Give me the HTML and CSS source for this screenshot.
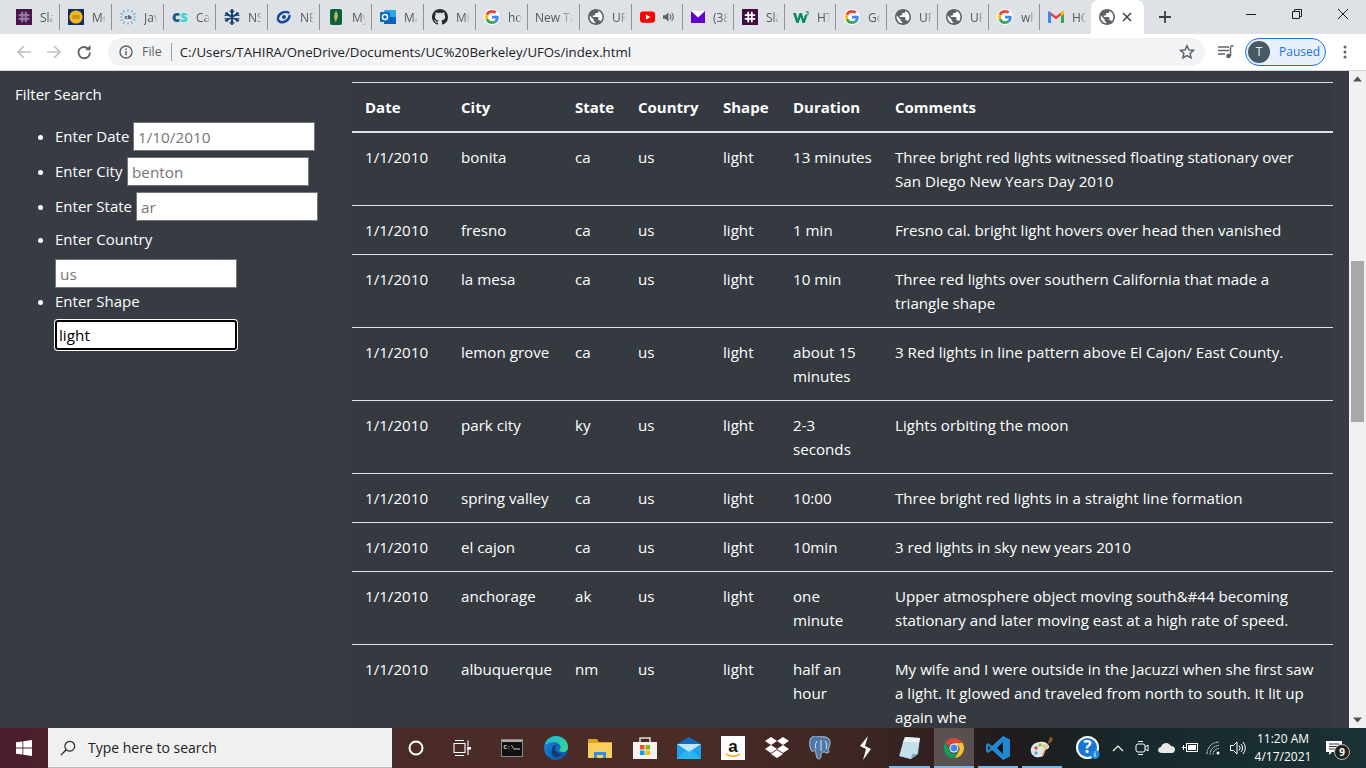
FILE: index.html
```html
<!DOCTYPE html>
<html lang="en">
<head>
<meta charset="utf-8">
<title>UFOs</title>
<link rel="stylesheet" href="styles.css">
</head>
<body>
<svg class="defs" width="0" height="0" aria-hidden="true">
  <defs>
    <symbol id="globe" viewBox="2 2 20 20"><circle cx="12" cy="12" r="9" fill="#fff"/><path fill="#5f6368" d="M12 2C6.480 2 2 6.480 2 12s4.480 10 10 10 10-4.480 10-10S17.520 2 12 2zm-1 17.930c-3.950-.49-7-3.850-7-7.930 0-.62.080-1.210.210-1.790L9 15v1c0 1.100.9 2 2 2v1.930zm6.900-2.540c-.26-.81-1-1.390-1.900-1.390h-1v-3c0-.55-.45-1-1-1H8v-2h2c.550 0 1-.45 1-1V7h2c1.100 0 2-.9 2-2v-.41c2.930 1.190 5 4.060 5 7.410 0 2.080-.8 3.970-2.100 5.390z"/></symbol>
    <symbol id="gee" viewBox="0 0 48 48"><path fill="#EA4335" d="M24 9.500c3.540 0 6.710 1.220 9.210 3.600l6.850-6.850C35.900 2.380 30.470 0 24 0 14.620 0 6.510 5.380 2.560 13.220l7.980 6.190C12.430 13.720 17.740 9.500 24 9.500z"/><path fill="#4285F4" d="M46.980 24.550c0-1.570-.15-3.090-.38-4.550H24v9.020h12.940c-.58 2.960-2.260 5.480-4.780 7.180l7.730 6c4.510-4.180 7.090-10.360 7.090-17.650z"/><path fill="#FBBC05" d="M10.530 28.590c-.48-1.450-.76-2.990-.76-4.590s.27-3.140.76-4.590l-7.980-6.190C.92 16.460 0 20.120 0 24c0 3.880.92 7.540 2.560 10.780l7.970-6.190z"/><path fill="#34A853" d="M24 48c6.480 0 11.930-2.130 15.890-5.810l-7.730-6c-2.150 1.450-4.920 2.300-8.160 2.300-6.260 0-11.570-4.220-13.470-9.910l-7.980 6.190C6.510 42.620 14.620 48 24 48z"/></symbol>
  </defs>
</svg>

<header class="tabstrip">
  <div class="tab wide"><svg class="fav" width="16" height="16" viewBox="0 0 16 16"><rect width="16" height="16" fill="#4a154b"/><path fill="none" stroke="#94799a" stroke-width="2.200" stroke-linecap="round" d="M6.200 3.500v9M9.800 3.500v9M3.500 6.200h9M3.500 9.800h9"/></svg><span class="tab-title">Slack</span></div>
  <div class="tab wide"><svg class="fav" width="16" height="16" viewBox="0 0 16 16"><rect width="16" height="16" fill="#0b2f66"/><circle cx="8" cy="8" r="6.600" fill="#f3b81f"/><path d="M4 7h8M4.500 9h7" stroke="#8a6a10" stroke-width=".9"/></svg><span class="tab-title">Medium</span></div>
  <div class="tab wide"><svg class="fav" width="16" height="16" viewBox="0 0 16 16"><g stroke="#5db4e4" stroke-width="1.100" stroke-linecap="round"><path d="M8 .5v2M3.500 1.500l1 1.800M12.500 1.500l-1 1.800M.8 4.500l1.900 1M15.200 4.500l-1.900 1M.8 11.500l1.900-1M15.200 11.500l-1.900-1M3.500 14.500l1-1.800M12.500 14.500l-1-1.800M8 15.500v-2M.5 8h1.500M14 8h1.500"/></g><text class="fav-cb" x="8" y="10">cb</text></svg><span class="tab-title">JavaScript</span></div>
  <div class="tab wide"><svg class="fav" width="16" height="16" viewBox="0 0 16 16"><text class="fav-cs" x="0" y="12.500"><tspan fill="#155a84">c</tspan><tspan fill="#3ed6d2">s</tspan></text></svg><span class="tab-title">Canvas</span></div>
  <div class="tab wide"><svg class="fav" width="16" height="16" viewBox="0 0 16 16"><g stroke="#123f6d" stroke-width="1.900" stroke-linecap="round" fill="none"><path d="M8 .8v14.400M1.800 4.400l12.400 7.200M14.200 4.400L1.800 11.600"/><path d="M6 1.800l2 2 2-2M6 14.200l2-2 2 2M1 6.500l2.800-.4L3 3.500M15 6.500l-2.800-.4.800-2.600M1 9.500l2.800.4L3 12.500M15 9.500l-2.800.4.800 2.600" stroke-width="1.200"/></g></svg><span class="tab-title">NSF</span></div>
  <div class="tab wide"><svg class="fav" width="16" height="16" viewBox="0 0 16 16"><path fill="none" stroke="#17489c" stroke-width="2.400" stroke-linecap="round" d="M12.500 3.500C9 1.800 3.200 4 2 8.500c-.8 3 2 5.500 5.500 4.500 3-.8 5.500-3 6-6"/><circle cx="8" cy="8" r="2" fill="#17489c"/></svg><span class="tab-title">NEA</span></div>
  <div class="tab wide"><svg class="fav" width="16" height="16" viewBox="0 0 16 16"><rect x="2" width="12" height="16" rx="2" fill="#0d5f3c"/><path d="M8 2c2 2 2.500 5 1 8-.4 1-1 2-1 4-.2-2-1.500-3-1.800-5C6 6.500 6.500 4 8 2z" fill="#c8b560"/></svg><span class="tab-title">My Wells</span></div>
  <div class="tab wide"><svg class="fav" width="16" height="16" viewBox="0 0 16 16"><rect x="4" y="1" width="12" height="14" rx="1" fill="#28a8ea"/><path d="M4 8h12v7H4z" fill="#0364b8"/><rect y="3" width="10" height="10" rx="1" fill="#0f6cbd"/><circle cx="5" cy="8" r="2.500" fill="none" stroke="#fff" stroke-width="1.400"/></svg><span class="tab-title">Mail</span></div>
  <div class="tab wide"><svg class="fav" width="16" height="16" viewBox="0 0 16 16"><path fill="#24292e" d="M8 0C3.580 0 0 3.580 0 8c0 3.540 2.290 6.530 5.470 7.590.4.070.55-.17.55-.38 0-.19-.01-.82-.01-1.490-2.010.37-2.530-.49-2.690-.94-.09-.23-.48-.94-.82-1.130-.28-.15-.68-.52-.01-.53.630-.01 1.080.58 1.230.82.720 1.210 1.870.87 2.330.66.070-.52.280-.87.510-1.070-1.780-.2-3.640-.89-3.640-3.950 0-.87.310-1.590.820-2.150-.08-.2-.36-1.020.08-2.120 0 0 .67-.21 2.200.82.640-.18 1.320-.27 2-.27.680 0 1.360.090 2 .27 1.530-1.040 2.200-.82 2.200-.82.440 1.100.160 1.920.080 2.120.510.560.820 1.270.820 2.150 0 3.070-1.870 3.750-3.650 3.950.290.250.540.730.540 1.480 0 1.070-.01 1.930-.01 2.200 0 .210.150.460.550.380A8.013 8.013 0 0016 8c0-4.420-3.580-8-8-8z"/></svg><span class="tab-title">Mission</span></div>
  <div class="tab wide"><span class="gee-wrap"><svg width="14" height="14"><use href="#gee"/></svg></span><span class="tab-title">how to</span></div>
  <div class="tab wide notab-icon"><span class="tab-title">New Tab</span></div>
  <div class="tab wide"><svg class="fav" width="16" height="16"><use href="#globe"/></svg><span class="tab-title">UFOs</span></div>
  <div class="tab"><svg class="fav" width="15" height="12" viewBox="0 0 16 12"><rect width="16" height="12" rx="3" fill="#f00"/><path d="M6.300 3.200v5.600L11 6z" fill="#fff"/></svg><svg class="speaker" width="11" height="12" viewBox="0 0 12 12"><path fill="#5f6368" d="M0 4h2.500L6 1v10L2.500 8H0z"/><path fill="none" stroke="#5f6368" stroke-width="1.200" d="M7.500 3.500a3.500 3.500 0 010 5M9.500 1.800a6 6 0 010 8.400"/></svg></div>
  <div class="tab"><svg class="fav" width="14" height="12" viewBox="0 0 14 12"><rect width="14" height="12" fill="#5f01d1"/><path d="M0 0l7 6.500L14 0" fill="#fff"/></svg><span class="tab-title">(38)</span></div>
  <div class="tab"><svg class="fav" width="16" height="16" viewBox="0 0 16 16"><rect width="16" height="16" fill="#3f0e40"/><path fill="none" stroke="#fff" stroke-width="1.800" stroke-linecap="round" d="M6.200 3.500v9M9.800 3.500v9M3.500 6.200h9M3.500 9.800h9"/></svg><span class="tab-title">Slack</span></div>
  <div class="tab"><svg class="fav" width="16" height="14" viewBox="0 0 16 14"><path d="M0 3h3l1.600 6L6.500 3h2.300l1.800 6L12 5h2.500l-2.800 8H9.500L7.600 7l-2 6H3.400z" fill="#0a8a5f"/><text class="fav-w3" x="12.500" y="5">3</text></svg><span class="tab-title">HTML</span></div>
  <div class="tab"><span class="gee-wrap"><svg width="14" height="14"><use href="#gee"/></svg></span><span class="tab-title">Google</span></div>
  <div class="tab"><svg class="fav" width="16" height="16"><use href="#globe"/></svg><span class="tab-title">UFOs</span></div>
  <div class="tab"><svg class="fav" width="16" height="16"><use href="#globe"/></svg><span class="tab-title">UFOs</span></div>
  <div class="tab"><span class="gee-wrap"><svg width="14" height="14"><use href="#gee"/></svg></span><span class="tab-title">what</span></div>
  <div class="tab tab-last"><svg class="fav" width="16" height="12" viewBox="0 0 16 12"><path fill="#4285f4" d="M0 1.300C0 .3 1 0 1.800.5L3 1.400V12H1.100C.5 12 0 11.500 0 10.900z"/><path fill="#34a853" d="M13 1.400l1.200-.9c.8-.5 1.800-.2 1.800.8v9.600c0 .6-.5 1.100-1.100 1.100H13z"/><path fill="#ea4335" d="M3 1.400l5 3.800 5-3.800v3L8 8.200 3 4.400z"/><path fill="#fbbc04" d="M13 1.400l1.200-.9c.8-.5 1.800-.2 1.800.8V3l-3 2.300z"/></svg><span class="tab-title">HOME</span></div>
  <div class="tab-active"><svg class="fav" width="16" height="16"><use href="#globe"/></svg><svg class="tab-close" width="10" height="10" viewBox="0 0 10 10"><path d="M1 1l8 8M9 1L1 9" stroke="#3c4043" stroke-width="1.500"/></svg></div>
  <svg class="newtab" width="14" height="14" viewBox="0 0 14 14"><path d="M7 1v12M1 7h12" stroke="#3c4043" stroke-width="1.800"/></svg>
  <div class="winctl">
    <svg width="12" height="12" viewBox="0 0 12 12"><path d="M1 6.500h10" stroke="#1f1f1f"/></svg>
    <svg width="12" height="12" viewBox="0 0 12 12"><path d="M1.500 3.500h7v7h-7zM3.500 3.500v-2h7v7h-2" fill="none" stroke="#1f1f1f"/></svg>
    <svg width="12" height="12" viewBox="0 0 12 12"><path d="M1 1l10 10M11 1L1 11" stroke="#1f1f1f"/></svg>
  </div>
</header>

<nav class="toolbar">
  <svg class="nav-ico" width="16" height="16" viewBox="0 0 16 16"><path d="M15 8H2M8 2L2 8l6 6" fill="none" stroke="#bcbfc3" stroke-width="1.700"/></svg>
  <svg class="nav-ico" width="16" height="16" viewBox="0 0 16 16"><path d="M1 8h13M8 2l6 6-6 6" fill="none" stroke="#bcbfc3" stroke-width="1.700"/></svg>
  <svg class="nav-ico" width="16" height="16" viewBox="0 0 16 16"><path d="M13.500 8A5.500 5.500 0 112 8a5.500 5.500 0 019.500-3.700" fill="none" stroke="#5f6368" stroke-width="1.800" transform="translate(.5 .5)"/><path d="M14.500 1v5.200H9.300z" fill="#5f6368"/></svg>
  <div class="omnibox">
    <svg class="omni-info" width="14" height="14" viewBox="0 0 14 14"><circle cx="7" cy="7" r="6" fill="none" stroke="#5f6368" stroke-width="1.400"/><path d="M7 6v4.200M7 3.600v1.400" stroke="#5f6368" stroke-width="1.500"/></svg>
    <span class="omni-file">File</span>
    <span class="omni-sep"></span>
    <span class="omni-url">C:/Users/TAHIRA/OneDrive/Documents/UC%20Berkeley/UFOs/index.html</span>
    <svg class="omni-star" width="16" height="16" viewBox="0 0 16 16"><path d="M8 1.800l1.900 4.100 4.500.5-3.300 3 .9 4.500L8 11.600l-4 2.300.9-4.500-3.300-3 4.500-.5z" fill="none" stroke="#5f6368" stroke-width="1.500"/></svg>
  </div>
  <svg class="media" width="16" height="14" viewBox="0 0 16 14"><path d="M0 2h11M0 5.500h11M0 9h7" stroke="#5f6368" stroke-width="1.300"/><path d="M12.500 1.500v9.500" stroke="#5f6368" stroke-width="1.500"/><path d="M12.500 1h3" stroke="#5f6368" stroke-width="1.500"/><circle cx="10.500" cy="11" r="2.300" fill="#5f6368"/></svg>
  <div class="profile"><span class="avatar">T</span><span class="paused">Paused</span></div>
  <svg class="dots" width="4" height="14" viewBox="0 0 4 14"><circle cx="2" cy="2" r="1.500" fill="#5f6368"/><circle cx="2" cy="7" r="1.500" fill="#5f6368"/><circle cx="2" cy="12" r="1.500" fill="#5f6368"/></svg>
</nav>

<main class="page">
  <aside class="sidebar">
    <div class="filter-title">Filter Search</div>
    <ul class="filters">
      <li class="filter inline"><label class="lab-date" for="f-date">Enter Date</label><input id="f-date" type="text" placeholder="1/10/2010"></li>
      <li class="filter inline"><label class="lab-city" for="f-city">Enter City</label><input id="f-city" type="text" placeholder="benton"></li>
      <li class="filter inline"><label class="lab-state" for="f-state">Enter State</label><input id="f-state" type="text" placeholder="ar"></li>
      <li class="filter stacked"><label for="f-country">Enter Country</label><input id="f-country" type="text" placeholder="us"></li>
      <li class="filter stacked"><label for="f-shape">Enter Shape</label><input id="f-shape" class="focused" type="text" value="light"></li>
    </ul>
  </aside>
  <section class="content">
    <table class="ufo">
      <thead>
        <tr><th>Date</th><th>City</th><th>State</th><th>Country</th><th>Shape</th><th>Duration</th><th>Comments</th></tr>
      </thead>
      <tbody>
        <tr><td>1/1/2010</td><td>bonita</td><td>ca</td><td>us</td><td>light</td><td class="nowrap">13 minutes</td><td>Three bright red lights witnessed floating stationary over San Diego New Years Day 2010</td></tr>
        <tr><td>1/1/2010</td><td>fresno</td><td>ca</td><td>us</td><td>light</td><td>1 min</td><td>Fresno cal. bright light hovers over head then vanished</td></tr>
        <tr><td>1/1/2010</td><td>la mesa</td><td>ca</td><td>us</td><td>light</td><td>10 min</td><td>Three red lights over southern California that made a triangle shape</td></tr>
        <tr><td>1/1/2010</td><td>lemon grove</td><td>ca</td><td>us</td><td>light</td><td>about 15 minutes</td><td>3 Red lights in line pattern above El Cajon/ East County.</td></tr>
        <tr><td>1/1/2010</td><td>park city</td><td>ky</td><td>us</td><td>light</td><td>2-3 seconds</td><td>Lights orbiting the moon</td></tr>
        <tr><td>1/1/2010</td><td>spring valley</td><td>ca</td><td>us</td><td>light</td><td>10:00</td><td>Three bright red lights in a straight line formation</td></tr>
        <tr><td>1/1/2010</td><td>el cajon</td><td>ca</td><td>us</td><td>light</td><td>10min</td><td>3 red lights in sky new years 2010</td></tr>
        <tr><td>1/1/2010</td><td>anchorage</td><td>ak</td><td>us</td><td>light</td><td>one minute</td><td>Upper atmosphere object moving south&amp;#44 becoming stationary and later moving east at a high rate of speed.</td></tr>
        <tr><td>1/1/2010</td><td>albuquerque</td><td>nm</td><td>us</td><td>light</td><td>half an hour</td><td>My wife and I were outside in the Jacuzzi when she first saw a light. It glowed and traveled from north to south. It lit up again whe</td></tr>
      </tbody>
    </table>
  </section>
  <div class="scrollbar">
    <svg class="sb-arrow" width="17" height="17" viewBox="0 0 17 17"><path d="M8.500 5.500l4.500 5H4z" fill="#505050"/></svg>
    <div class="sb-thumb"></div>
    <svg class="sb-arrow sb-bottom" width="17" height="17" viewBox="0 0 17 17"><path d="M8.500 11.500L4 6.500h9z" fill="#505050"/></svg>
  </div>
</main>

<footer class="taskbar">
  <div class="start"><svg width="16" height="16" viewBox="0 0 16 16"><path fill="#fff" d="M0 2.300l6.500-.9v6.200H0zM7.300 1.300L16 0v7.600H7.300zM0 8.400h6.500v6.200L0 13.700zM7.300 8.400H16V16l-8.700-1.200z"/></svg></div>
  <div class="searchbox">
    <svg width="16" height="16" viewBox="0 0 18 18"><circle cx="11" cy="7" r="5.500" fill="none" stroke="#222" stroke-width="1.300"/><path d="M7 11l-6 6" stroke="#222" stroke-width="1.500"/></svg>
    <span>Type here to search</span>
  </div>
  <div class="tb-sys cortana"><svg width="16" height="16" viewBox="0 0 16 16"><circle cx="8" cy="8" r="6.500" fill="none" stroke="#fff" stroke-width="2"/></svg></div>
  <div class="tb-sys taskview"><svg width="20" height="16" viewBox="0 0 20 16"><path d="M1 3.500h11v9H1zM2 .5h9M2 15.500h9M15 .5v6M15 9v6" fill="none" stroke="#fff" stroke-width="1.100"/><rect x="14" y="7" width="4" height="2.600" fill="#fff"/></svg></div>
  <div class="apps">
    <div class="app"><svg width="22" height="18" viewBox="0 0 22 18"><rect x=".5" y=".5" width="21" height="17" fill="#111" stroke="#8a8a8a"/><rect x="1" y="1" width="20" height="2" fill="#aaa"/><text class="cmd-text" x="2.500" y="9.500">C:\</text><path d="M13 10h6" stroke="#ddd"/></svg></div>
    <div class="app"><svg width="24" height="24" viewBox="0 0 24 24"><defs><linearGradient id="edge1" x1="0" y1="0" x2="1" y2="1"><stop offset="0" stop-color="#1fb2d8"/><stop offset="1" stop-color="#3ddc84"/></linearGradient><linearGradient id="edge2" x1="0" y1="0" x2="1" y2="1"><stop offset="0" stop-color="#1b8de0"/><stop offset="1" stop-color="#0a4a9c"/></linearGradient></defs><circle cx="12" cy="12" r="12" fill="url(#edge2)"/><path d="M1 8C3 2 8 0 12 0c7 0 12 5 12 11 0 3-2 5-5 5-2 0-4-1-4-2 2-1 2-3 1-5-2-3-7-4-11-2-2 1-3 2-4 1z" fill="url(#edge1)"/><path d="M8 13c0-3 3-5 6-4-3 0-4 3-2 6 1.500 2 4 3 6 2-2 3-5 5-8 4-2-1-3-4-2-8z" fill="#0d3c78"/></svg></div>
    <div class="app"><svg width="24" height="22" viewBox="0 0 24 22"><path d="M0 2h9l2 3h13v2H0z" fill="#d9a628"/><path d="M0 6h24v15H0z" fill="#f8cf5c"/><path d="M6 15h12v6H6z" fill="#3a8dde"/><path d="M9 18h6v3H9z" fill="#f8cf5c"/></svg></div>
    <div class="app"><svg width="24" height="24" viewBox="0 0 24 24"><path d="M7 6V2h10v4" fill="none" stroke="#ddd" stroke-width="1.500"/><path d="M0 6h24v17H0z" fill="#f3f3f3"/><path d="M7 9h4.500v4.500H7z" fill="#f25022"/><path d="M12.500 9H17v4.500h-4.500z" fill="#7fba00"/><path d="M7 14.500h4.500V19H7z" fill="#00a4ef"/><path d="M12.500 14.500H17V19h-4.500z" fill="#ffb900"/></svg></div>
    <div class="app"><svg width="24" height="22" viewBox="0 0 24 22"><path d="M0 7L12 0l12 7v15H0z" fill="#0f6cbd"/><path d="M0 7h24v15H0z" fill="#1da1ea"/><path d="M0 7l12 8 12-8" fill="#bfe6fb"/><path d="M0 22l9-9 3 2 3-2 9 9z" fill="#2bb4f3"/></svg></div>
    <div class="app"><svg width="24" height="24" viewBox="0 0 24 24"><rect width="24" height="24" fill="#fff"/><text class="amz" x="12" y="16">a</text><path d="M5 18c4 3 10 3 14 0" fill="none" stroke="#f90" stroke-width="1.500"/></svg></div>
    <div class="app"><svg width="24" height="22" viewBox="0 0 24 22"><path fill="#fff" d="M6 0l6 4-6 4-6-4zM18 0l6 4-6 4-6-4zM0 12l6-4 6 4-6 4zM18 8l6 4-6 4-6-4zM6 17l6-4 6 4-6 4z"/></svg></div>
    <div class="app"><svg width="24" height="24" viewBox="0 0 24 24"><path d="M3 1c-3 2-3 8-1 13 1 3 3 1 4 0 1 2 1 6 2 8 2 2 4 1 4-3 0-2 1-3 3-3 2 0 1 1 3 1s3-2 1-3c2-5 3-8 1-11-2-2-6-3-8-2-2-1-6-2-9 0z" fill="#4e78a8" stroke="#cfd9e6" stroke-width=".8"/><path d="M12 4v11M8 5c-2 3-2 6-1 8M16 5c2 2 2 5 1 8" fill="none" stroke="#fff" stroke-width=".8"/></svg></div>
    <div class="app"><svg width="12" height="24" viewBox="0 0 12 24"><path d="M9 0L1 10l6 3-3 11 8-11-6-3z" fill="#fff"/></svg></div>
    <div class="app app-on"><svg width="24" height="24" viewBox="0 0 24 24"><path d="M8 1l15 1-2 16-7 5-12-3z" fill="#9cc9d8"/><path d="M8 1l15 1-1 5L6 6z" fill="#e8f3f6"/><path d="M6 6l16 1-2 11-6 5-11-3z" fill="#c3dfe8"/><path d="M14 23l1-5 5 0z" fill="#7aa9b8"/></svg></div>
    <div class="app app-on app-current"><svg width="24" height="24" viewBox="0 0 48 48"><path d="M24 4a20 20 0 0117.300 10H24a10 10 0 00-9.300 6.300L6.700 13.500A20 20 0 0124 4z" fill="#db4437"/><path d="M41.300 14A20 20 0 0126.200 43.900l7-12.800A10 10 0 0032.700 19l-8.700-5z" fill="#fbc02d"/><path d="M26.200 43.900A20 20 0 016.700 13.500l8 13.800a10 10 0 0018.500 3.800z" fill="#0f9d58"/><circle cx="24" cy="24" r="9" fill="#fff"/><circle cx="24" cy="24" r="7" fill="#4285f4"/></svg></div>
    <div class="app app-on"><svg width="24" height="24" viewBox="0 0 24 24"><path d="M17 0l7 3.500v17L17 24 6 14l-4 3-2-1.500v-7L2 7l4 3z" fill="#1f8ad2"/><path d="M17 6l-6 6 6 6z" fill="#12121c"/><path d="M2 9.500v5l2.500-2.500z" fill="#12121c"/></svg></div>
    <div class="app app-on"><svg width="24" height="24" viewBox="0 0 24 24"><path d="M1 16c-1-5 2-9 8-10 5-1 9 1 10 4 1 3-3 3-4 5-1 3-1 6-5 6-4 1-8-1-9-5z" fill="#dfe5ea"/><circle cx="6" cy="12" r="1.700" fill="#e04f3a"/><circle cx="10" cy="9" r="1.700" fill="#8bc34a"/><circle cx="14" cy="10" r="1.700" fill="#f5c33b"/><circle cx="6" cy="17" r="1.700" fill="#4aa3df"/><path d="M21 2L13 20l-1-1z" fill="#e08a2b"/><path d="M20 1l3 1-2 5-3-1z" fill="#8d5a2b"/></svg></div>
  </div>
  <div class="tray">
    <div class="tr-help"><svg width="24" height="24" viewBox="0 0 24 24"><circle cx="11.500" cy="11.500" r="10.500" fill="#1976d2" stroke="#fff" stroke-width="2"/><text class="help-q" x="11.500" y="17">?</text><circle cx="19" cy="18.500" r="4.500" fill="#1e88e5"/><path d="M19 17v4M19 15.500v1" stroke="#fff"/></svg></div>
    <div class="tr-item"><svg width="12" height="8" viewBox="0 0 12 8"><path d="M1 7l5-5 5 5" fill="none" stroke="#fff" stroke-width="1.200"/></svg></div>
    <div class="tr-item"><svg width="14" height="16" viewBox="0 0 14 16"><rect x="1" y="4" width="9" height="8" rx="2" fill="none" stroke="#fff"/><path d="M10 7l3-2v6l-3-2M3 1.500h5M3 14.500h5" fill="none" stroke="#fff"/></svg></div>
    <div class="tr-item"><svg width="17" height="10" viewBox="0 0 17 10"><path d="M4 10C1 10 0 8 0 7c0-2 2-3 3-3 1-3 3-4 5-4 3 0 4 2 5 3 2 0 4 1 4 3.500S15 10 14 10z" fill="#e8e8e8"/></svg></div>
    <div class="tr-item"><svg width="16" height="12" viewBox="0 0 16 12"><rect x="4.500" y="1.500" width="11" height="8" fill="none" stroke="#fff"/><rect x="6" y="3" width="8" height="5" fill="#fff"/><path d="M0 5.500h4M1.500 3v5" stroke="#fff"/></svg></div>
    <div class="tr-item"><svg width="16" height="14" viewBox="0 0 16 14"><path d="M1 13a12 12 0 0112-12M4 13.500a9 9 0 019-9M7 13.500a6 6 0 016-6" fill="none" stroke="#ddd" stroke-dasharray="2 .6"/><circle cx="12" cy="12" r="1.500" fill="#fff"/></svg></div>
    <div class="tr-item"><svg width="16" height="14" viewBox="0 0 16 14"><path d="M.5 4.500h3L7 1v12L3.500 9.500h-3zM9 4.500a3.500 3.500 0 010 5M11 3a6 6 0 010 8M13 1a9 9 0 010 12" fill="none" stroke="#fff"/></svg></div>
    <div class="clock"><span>11:20 AM</span><span>4/17/2021</span></div>
    <div class="notif"><svg width="16" height="14" viewBox="0 0 16 14"><path d="M0 0h16v11H6l-3 3v-3H0z" fill="#fff"/><path d="M3 3h10M3 5.500h10M3 8h7" stroke="#333"/></svg><span class="badge">9</span></div>
  </div>
</footer>
</body>
</html>
```
FILE: styles.css
```css
* { box-sizing: border-box; }
html, body { margin: 0; height: 100%; }
body {
  display: flex;
  flex-direction: column;
  height: 768px;
  overflow: hidden;
  font-family: "Open Sans", "Noto Sans", sans-serif;
  background: #373c44;
}
.defs { position: absolute; }

/* tab strip */
.tabstrip {
  flex: none;
  height: 34px;
  display: flex;
  align-items: center;
  padding-left: 8px;
  background: #dee1e6;
}
.tab {
  flex: none;
  width: 51px;
  height: 26px;
  display: flex;
  align-items: center;
  padding: 0 5px 0 8px;
  border-right: 1px solid #8f9296;
  overflow: hidden;
  font-size: 12px;
}
.tab.wide { width: 52px; }
.tab-last { border-right: 0; }
.fav { flex: none; margin-right: 8px; }
.speaker { flex: none; }
.gee-wrap {
  flex: none;
  width: 16px;
  height: 16px;
  margin-right: 8px;
  border-radius: 50%;
  background: #fff;
  display: flex;
  align-items: center;
  justify-content: center;
}
.gee-wrap svg { flex: none; }
.notab-icon { padding-left: 7px; }
.tab-title {
  flex: 1;
  min-width: 0;
  overflow: hidden;
  white-space: nowrap;
  color: #54575b;
  -webkit-mask-image: linear-gradient(90deg, #000 60%, transparent 100%);
  mask-image: linear-gradient(90deg, #000 60%, transparent 100%);
}
.fav-cb { font: 700 6px "Open Sans", sans-serif; fill: #1c2d3f; text-anchor: middle; }
.fav-cs { font: 800 15px "Open Sans", sans-serif; }
.fav-w3 { font: 700 6px "Open Sans", sans-serif; fill: #0a8a5f; }

.tab-active {
  flex: none;
  width: 53px;
  height: 34px;
  display: flex;
  align-items: center;
  padding-left: 8px;
  background: #fff;
  border-radius: 8px 8px 0 0;
}
.tab-close { flex: none; margin-left: -1px; }
.newtab { flex: none; margin-left: 14px; }
.winctl {
  margin-left: auto;
  width: 138px;
  height: 28px;
  display: grid;
  grid-template-columns: repeat(3, 46px);
  align-items: center;
  justify-items: center;
  align-self: flex-start;
}

/* toolbar */
.toolbar {
  flex: none;
  height: 37px;
  display: flex;
  align-items: center;
  padding: 0 0 1px 16px;
  background: #fff;
  border-bottom: 1px solid #d3d5d8;
}
.nav-ico { flex: none; margin-right: 14px; }
.omnibox {
  flex: none;
  width: 1097px;
  height: 28px;
  margin-left: 2px;
  display: flex;
  align-items: center;
  padding-left: 11px;
  background: #f1f3f4;
  border-radius: 14px;
  color: #202124;
}
.omni-info { flex: none; }
.omni-file { margin-left: 9px; color: #5f6368; font-size: 12.500px; }
.omni-sep { width: 1px; height: 18px; margin: 0 8px 0 9px; background: #9a9da1; }
.omni-url { white-space: nowrap; font-size: 13.230px; }
.omni-star { margin-left: auto; margin-right: 10px; }
.media { flex: none; margin-left: 13px; }
.profile {
  flex: none;
  width: 81px;
  height: 28px;
  margin-left: 11px;
  display: flex;
  align-items: center;
  padding-left: 2px;
  background: #e8f0fe;
  border: 1px solid #1a73e8;
  border-radius: 14px;
  font-size: 12px;
  color: #1a73e8;
}
.avatar {
  width: 22px;
  height: 22px;
  margin-right: 9px;
  border-radius: 50%;
  background: #455a64;
  color: #e8eaed;
  text-align: center;
  line-height: 22px;
}
.dots { flex: none; margin-left: 17px; }

/* page */
.page {
  flex: 1;
  min-height: 0;
  display: flex;
  overflow: hidden;
  color: #fff;
  font-size: 15px;
  line-height: 24px;
}
.sidebar {
  flex: none;
  width: 352px;
  padding: 11px 0 0 15px;
}
.filter-title { margin-bottom: 16px; }
.filters { margin: 0; padding: 0 0 0 40px; }
.filter { display: list-item; }
.filter.inline { margin-bottom: 6px; height: 29px; line-height: 29px; }
.filter.inline label { display: inline-block; }
.lab-date { width: 78px; }
.lab-city { width: 72px; }
.lab-state { width: 81px; }
.filter input {
  width: 182px;
  height: 29px;
  padding: 0 4px;
  font: 15.300px "Open Sans", sans-serif;
  vertical-align: top;
  background: #fff;
  color: #000;
  border: 1px solid #767676;
  border-radius: 0;
}
.filter input::placeholder { color: #757575; opacity: 1; }
.filter.stacked label { display: block; margin-bottom: 8px; }
.filter.stacked { height: 62px; }
.filter input.focused {
  display: block;
  height: 30px;
  margin-top: -1px;
  padding: 0 2px;
  border: 2px solid #000;
  border-radius: 3px;
  box-shadow: 0 0 0 1px #fff;
}

.content {
  flex: none;
  width: 981px;
  padding-top: 11px;
}
.ufo {
  width: 981px;
  table-layout: fixed;
  border-collapse: separate;
  border-spacing: 0;
  background: #343a40;
}
.ufo th, .ufo td {
  padding: 12px;
  text-align: left;
  vertical-align: top;
  font-size: 15.150px;
  line-height: 24px;
}
.ufo th:first-child, .ufo td:first-child { padding-left: 13px; }
.ufo th:last-child, .ufo td:last-child { padding-right: 15px; }
.ufo td.nowrap { white-space: nowrap; }
.ufo th {
  border-top: 1px solid #dee2e6;
  border-bottom: 2px solid #dee2e6;
  font-size: 15px;
  font-weight: 700;
}
.ufo td { border-bottom: 1px solid #dee2e6; }
.ufo th:nth-child(1) { width: 97px; }
.ufo th:nth-child(2) { width: 114px; }
.ufo th:nth-child(3) { width: 63px; }
.ufo th:nth-child(4) { width: 85px; }
.ufo th:nth-child(5) { width: 70px; }
.ufo th:nth-child(6) { width: 102px; }

.scrollbar {
  flex: none;
  width: 17px;
  margin-left: 16px;
  display: flex;
  flex-direction: column;
  background: #f1f1f1;
}
.sb-arrow { flex: none; }
.sb-thumb {
  flex: none;
  height: 161px;
  margin: 173px 2px 0;
  background: #a8a8a8;
}
.sb-bottom { margin-top: auto; }

/* taskbar */
.taskbar {
  flex: none;
  height: 40px;
  display: flex;
  align-items: center;
  color: #fff;
  background: linear-gradient(90deg, #4d1e2c 0, #4a2a27 30%, #4a2c25 50%, #3b2522 64%, #201b1c 74%, #162a2d 84%, #1b3135 100%);
}
.start {
  flex: none;
  width: 48px;
  display: flex;
  justify-content: center;
}
.searchbox {
  flex: none;
  width: 344px;
  height: 40px;
  display: flex;
  align-items: center;
  gap: 12px;
  padding-left: 12px;
  background: #f0f0f0;
  border-bottom: 1px solid #b9b9b9;
  font-size: 14px;
  color: #222;
}
.tb-sys { flex: none; display: flex; justify-content: center; }
.cortana { width: 48px; }
.taskview { width: 46px; margin-right: 4px; }
.apps { flex: none; display: flex; height: 40px; }
.app {
  flex: none;
  width: 44.170px;
  height: 40px;
  display: flex;
  align-items: center;
  justify-content: center;
}
.app-on { border-bottom: 2px solid #76b9ed; padding-top: 2px; margin: 0 2px; width: 40.170px; }
.app-current { background: rgba(255, 255, 255, .22); }
.cmd-text { font: 700 6px "Liberation Mono", monospace; fill: #ddd; }
.amz { font: 700 17px "Liberation Sans", sans-serif; fill: #111; text-anchor: middle; }
.help-q { font: 700 17px "Open Sans", sans-serif; fill: #fff; text-anchor: middle; }

.tray {
  flex: 1;
  display: flex;
  align-items: center;
  height: 40px;
  padding-left: 6px;
}
.tr-help { flex: none; width: 36px; display: flex; justify-content: center; }
.tr-item { flex: none; width: 24px; display: flex; justify-content: center; }
.clock {
  flex: none;
  width: 66px;
  display: flex;
  flex-direction: column;
  align-items: center;
  font-size: 12px;
  line-height: 18px;
  color: #fff;
}
.notif {
  flex: none;
  width: 36px;
  height: 40px;
  position: relative;
  display: flex;
  align-items: center;
  justify-content: center;
}
.badge {
  position: absolute;
  left: 18px;
  top: 16px;
  width: 16px;
  height: 16px;
  border: 1px solid #bbb;
  border-radius: 50%;
  background: #222;
  font-size: 10px;
  font-weight: 700;
  line-height: 14px;
  text-align: center;
}
```
